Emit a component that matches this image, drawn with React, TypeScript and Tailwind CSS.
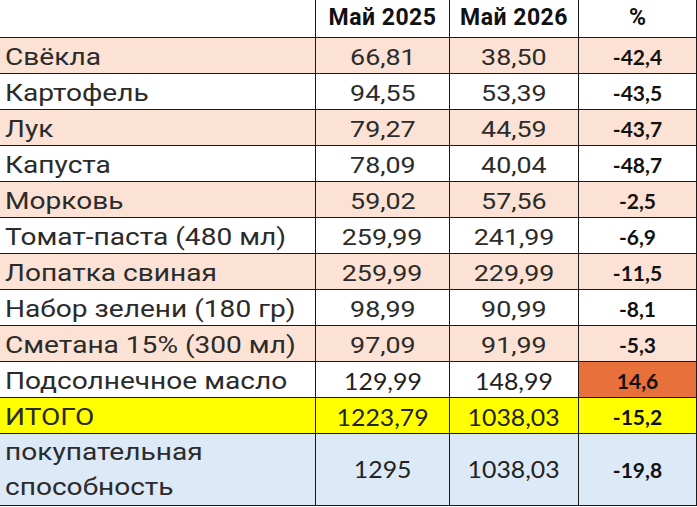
import React from "react";

type Row = { name: string; a: string; b: string; p: string; bg: string; pbg?: string; calibri?: boolean };

const rows: Row[] = [
  { name: "Свёкла", a: "66,81", b: "38,50", p: "-42,4", bg: "bg-[#fbe2d5]" },
  { name: "Картофель", a: "94,55", b: "53,39", p: "-43,5", bg: "bg-white" },
  { name: "Лук", a: "79,27", b: "44,59", p: "-43,7", bg: "bg-[#fbe2d5]" },
  { name: "Капуста", a: "78,09", b: "40,04", p: "-48,7", bg: "bg-white" },
  { name: "Морковь", a: "59,02", b: "57,56", p: "-2,5", bg: "bg-[#fbe2d5]" },
  { name: "Томат-паста (480 мл)", a: "259,99", b: "241,99", p: "-6,9", bg: "bg-white" },
  { name: "Лопатка свиная", a: "259,99", b: "229,99", p: "-11,5", bg: "bg-[#fbe2d5]" },
  { name: "Набор зелени (180 гр)", a: "98,99", b: "90,99", p: "-8,1", bg: "bg-white" },
  { name: "Сметана 15% (300 мл)", a: "97,09", b: "91,99", p: "-5,3", bg: "bg-[#fbe2d5]" },
  { name: "Подсолнечное масло", a: "129,99", b: "148,99", p: "14,6", bg: "bg-white", pbg: "bg-[#e8703a]", calibri: true },
  { name: "ИТОГО", a: "1223,79", b: "1038,03", p: "-15,2", bg: "bg-[#ffff00]", calibri: true },
];

const roboto = "font-['Roboto','Liberation_Sans',sans-serif]";
const lato = "font-['Lato','Liberation_Sans',sans-serif]";
const cell = "border-r border-b border-[#1a1a1a]";

function Num({ v, calibri }: { v: string; calibri?: boolean }) {
  return calibri ? (
    <span className={`inline-block scale-x-[1.08] text-[23px] text-[#222] ${lato}`}>{v}</span>
  ) : (
    <span className={`inline-block scale-x-[1.22] text-[22px] text-[#2b2b2b] ${roboto}`}>{v}</span>
  );
}

export default function App() {
  return (
    <div className="w-[697px] h-[507px] bg-white overflow-hidden">
      <div className="grid grid-cols-[316px_134px_129px_118px]">
        {/* header */}
        <div className={`h-[38px] ${cell}`} />
        <div className={`h-[38px] ${cell} flex items-center justify-center text-[23px] tracking-[0.5px] font-bold text-[#111] ${roboto}`}>Май 2025</div>
        <div className={`h-[38px] ${cell} flex items-center justify-center text-[23px] tracking-[0.5px] font-bold text-[#111] ${roboto}`}>Май 2026</div>
        <div className={`h-[38px] ${cell} flex items-center justify-center text-[23px] font-bold text-[#111] ${roboto}`}>%</div>

        {rows.map((r) => (
          <React.Fragment key={r.name}>
            <div className={`h-[36px] ${cell} ${r.bg} flex items-center pl-[5px] pt-[3px] whitespace-nowrap`}>
              <span className={`inline-block origin-left scale-x-[1.17] text-[24px] text-[#2b2b2b] ${roboto}`}>{r.name}</span>
            </div>
            <div className={`h-[36px] ${cell} ${r.bg} flex items-center justify-center pt-[3px]`}>
              <Num v={r.a} calibri={r.calibri} />
            </div>
            <div className={`h-[36px] ${cell} ${r.bg} flex items-center justify-center pt-[3px]`}>
              <Num v={r.b} calibri={r.calibri} />
            </div>
            <div className={`h-[36px] ${cell} ${r.pbg ?? r.bg} flex items-center justify-center pt-[3px] text-[21px] font-bold text-[#111] ${lato}`}>{r.p}</div>
          </React.Fragment>
        ))}

        <div className={`h-[72px] ${cell} bg-[#dce9f7] flex flex-col justify-center items-start pl-[5px] text-[24px] leading-[35px] text-[#2b2b2b] ${roboto}`}>
          <span className="inline-block origin-left scale-x-[1.17]">покупательная</span>
          <span className="inline-block origin-left scale-x-[1.17]">способность</span>
        </div>
        <div className={`h-[72px] ${cell} bg-[#dce9f7] flex items-center justify-center`}>
          <Num v="1295" calibri />
        </div>
        <div className={`h-[72px] ${cell} bg-[#dce9f7] flex items-center justify-center`}>
          <Num v="1038,03" calibri />
        </div>
        <div className={`h-[72px] ${cell} bg-[#dce9f7] flex items-center justify-center text-[21px] font-bold text-[#111] ${lato}`}>-19,8</div>
      </div>
    </div>
  );
}
